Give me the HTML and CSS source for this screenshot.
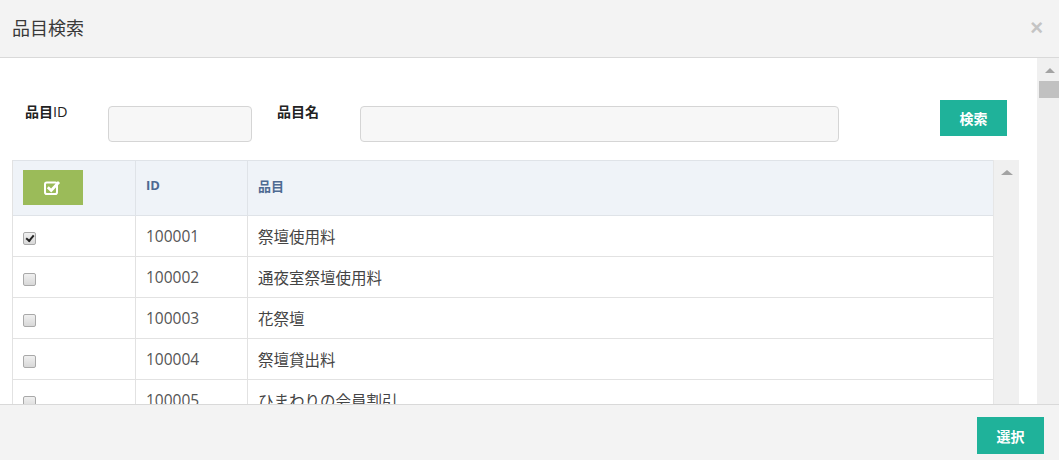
FILE: index.html
```html
<!DOCTYPE html>
<html lang="ja">
<head>
<meta charset="utf-8">
<link rel="stylesheet" href="styles.css">
</head>
<body>
<div class="modal">
  <div class="modal-header">
    <h4 class="modal-title">品目検索</h4>
    <span class="close">×</span>
  </div>
  <div class="modal-body">
    <div class="body-content">
      <div class="search-row">
        <label class="lbl lbl-id">品目<span class="lbl-latin">ID</span></label>
        <input class="inp inp-id" type="text">
        <label class="lbl lbl-name">品目名</label>
        <input class="inp inp-name" type="text">
        <button class="btn btn-search">検索</button>
      </div>
      <div class="grid-wrap">
        <div class="grid">
          <div class="row head">
            <div class="cell c-chk"><span class="chk-all"><svg width="18" height="15" viewBox="0 0 18 15"><rect x="1" y="2.5" width="12" height="11.5" rx="1.8" fill="none" stroke="#fff" stroke-width="2"/><path d="M3.8 7.2 L7.2 10.4 L15 2" fill="none" stroke="#fff" stroke-width="2.8"/></svg></span></div>
            <div class="cell c-id">ID</div>
            <div class="cell c-name">品目</div>
          </div>
          <div class="row"><div class="cell c-chk"><input class="cb" type="checkbox" checked></div><div class="cell c-id">100001</div><div class="cell c-name">祭壇使用料</div></div>
          <div class="row"><div class="cell c-chk"><input class="cb" type="checkbox"></div><div class="cell c-id">100002</div><div class="cell c-name">通夜室祭壇使用料</div></div>
          <div class="row"><div class="cell c-chk"><input class="cb" type="checkbox"></div><div class="cell c-id">100003</div><div class="cell c-name">花祭壇</div></div>
          <div class="row"><div class="cell c-chk"><input class="cb" type="checkbox"></div><div class="cell c-id">100004</div><div class="cell c-name">祭壇貸出料</div></div>
          <div class="row"><div class="cell c-chk"><input class="cb" type="checkbox"></div><div class="cell c-id">100005</div><div class="cell c-name">ひまわりの会員割引</div></div>
        </div>
        <div class="grid-scroll"><span class="arrow"></span></div>
      </div>
    </div>
    <div class="body-scroll"><span class="arrow"></span><span class="thumb"></span></div>
  </div>
  <div class="modal-footer">
    <button class="btn btn-select">選択</button>
  </div>
</div>
</body>
</html>
```
FILE: styles.css
```css
* { box-sizing: border-box; }
html, body { margin: 0; padding: 0; }
body {
  width: 1059px;
  height: 460px;
  overflow: hidden;
  font-family: "Open Sans", "Noto Sans CJK JP", sans-serif;
  color: #333;
  background: #fff;
}
.modal { display: flex; flex-direction: column; height: 460px; }
.modal-header {
  height: 58px;
  flex: none;
  background: #f3f3f3;
  border-bottom: 1px solid #d9d9d9;
  display: flex;
  align-items: center;
  justify-content: space-between;
  padding: 0 16px 0 12px;
}
.modal-title {
  margin: 0;
  font-size: 18px;
  font-weight: 400;
  color: #393939;
  font-family: "Noto Sans CJK JP", sans-serif;
  line-height: 1;
  padding-bottom: 3px;
}
.close {
  font-family: "Liberation Sans", sans-serif;
  font-size: 22px;
  font-weight: 700;
  color: #c4c4c4;
  line-height: 1;
  padding-bottom: 2px;
}
.modal-body {
  flex: none;
  height: 346px;
  display: flex;
  overflow: hidden;
}
.body-content {
  flex: 1;
  padding: 42px 18px 0 12px;
  overflow: hidden;
}
.body-scroll {
  width: 22px;
  flex: none;
  background: #f0f0f0;
  display: flex;
  flex-direction: column;
  align-items: flex-end;
}
.body-scroll .arrow {
  align-self: center;
  margin: 10px 0 0 3px;
  width: 0; height: 0;
  border-left: 5px solid transparent;
  border-right: 5px solid transparent;
  border-bottom: 5px solid #a3a3a3;
}
.body-scroll .thumb {
  margin-top: 8px;
  width: 20px;
  height: 17px;
  background: #c1c1c1;
}
.search-row {
  display: flex;
  align-items: flex-start;
  height: 60px;
}
.lbl {
  font-weight: 700;
  font-size: 14px;
  color: #222;
  font-family: "Noto Sans CJK JP", sans-serif;
  line-height: 20px;
  margin-top: 1px;
}
.lbl-latin { font-family: "Open Sans", sans-serif; font-weight: 400; font-size: 14.5px; }
.lbl-id { margin-left: 13px; width: 83px; }
.lbl-name { margin-left: 25px; width: 83px; }
.inp {
  margin-top: 6px;
  height: 36px;
  border: 1px solid #d5d5d5;
  border-radius: 4px;
  background: #f7f7f7;
  outline: none;
}
.inp-id { width: 144px; }
.inp-name { width: 479px; }
.btn {
  border: 0;
  background: #1fb29a;
  color: #fff;
  font-family: "Noto Sans CJK JP", sans-serif;
  font-size: 14px;
  font-weight: 700;
  padding: 0;
  height: 36px;
  width: 67px;
}
.btn-search { margin-left: 101px; }
.grid-wrap {
  display: flex;
  height: 260px;
}
.grid {
  width: 981px;
  flex: none;
  border-left: 1px solid #e2e2e2;
}
.grid-scroll {
  width: 26px;
  flex: none;
  background: #f0f0f0;
  border-left: 1px solid #e6e6e6;
  display: flex;
  justify-content: center;
}
.grid-scroll .arrow {
  margin-top: 10px;
  width: 0; height: 0;
  border-left: 6px solid transparent;
  border-right: 6px solid transparent;
  border-bottom: 5px solid #a3a3a3;
}
.row {
  display: flex;
  height: 41px;
  border-bottom: 1px solid #e2e2e2;
}
.row.head {
  height: 56px;
  background: #eff3f8;
  border-top: 1px solid #dfe3e8;
  border-bottom: 1px solid #dfe3e8;
}
.cell {
  display: flex;
  align-items: center;
  padding-left: 10px;
  font-size: 15.5px;
  color: #555;
  border-right: 1px solid #e2e2e2;
}
.head .cell {
  align-items: flex-start;
  padding-top: 15px;
  font-size: 13px;
  font-weight: 700;
  color: #4d6a92;
  border-right-color: #dfe3e8;
}
.head .c-chk { padding-top: 9px; }
.c-chk { width: 123px; }
.c-id { width: 112px; }
.c-name { flex: 1; border-right: 0; font-family: "Noto Sans CJK JP", sans-serif; color: #444; }
.cb {
  appearance: none;
  -webkit-appearance: none;
  margin: 4px 0 0 0;
  width: 13px;
  height: 13px;
  border: 1px solid #a9a9a9;
  border-radius: 2px;
  background: linear-gradient(#f0f0f0, #d8d8d8);
  display: flex;
  align-items: center;
  justify-content: center;
}
.cb:checked::after {
  content: "";
  width: 6px;
  height: 3px;
  border-left: 2px solid #222;
  border-bottom: 2px solid #222;
  transform: rotate(-50deg);
  margin-top: -2px;
}
.chk-all {
  width: 60px;
  height: 35px;
  background: #9bbb59;
  display: flex;
  align-items: center;
  justify-content: center;
}
.modal-footer {
  flex: none;
  height: 56px;
  background: #f3f3f3;
  border-top: 1px solid #d9d9d9;
  display: flex;
  justify-content: flex-end;
  align-items: flex-start;
  padding: 12px 15px 0 0;
}
.btn-select { height: 37px; }
```
